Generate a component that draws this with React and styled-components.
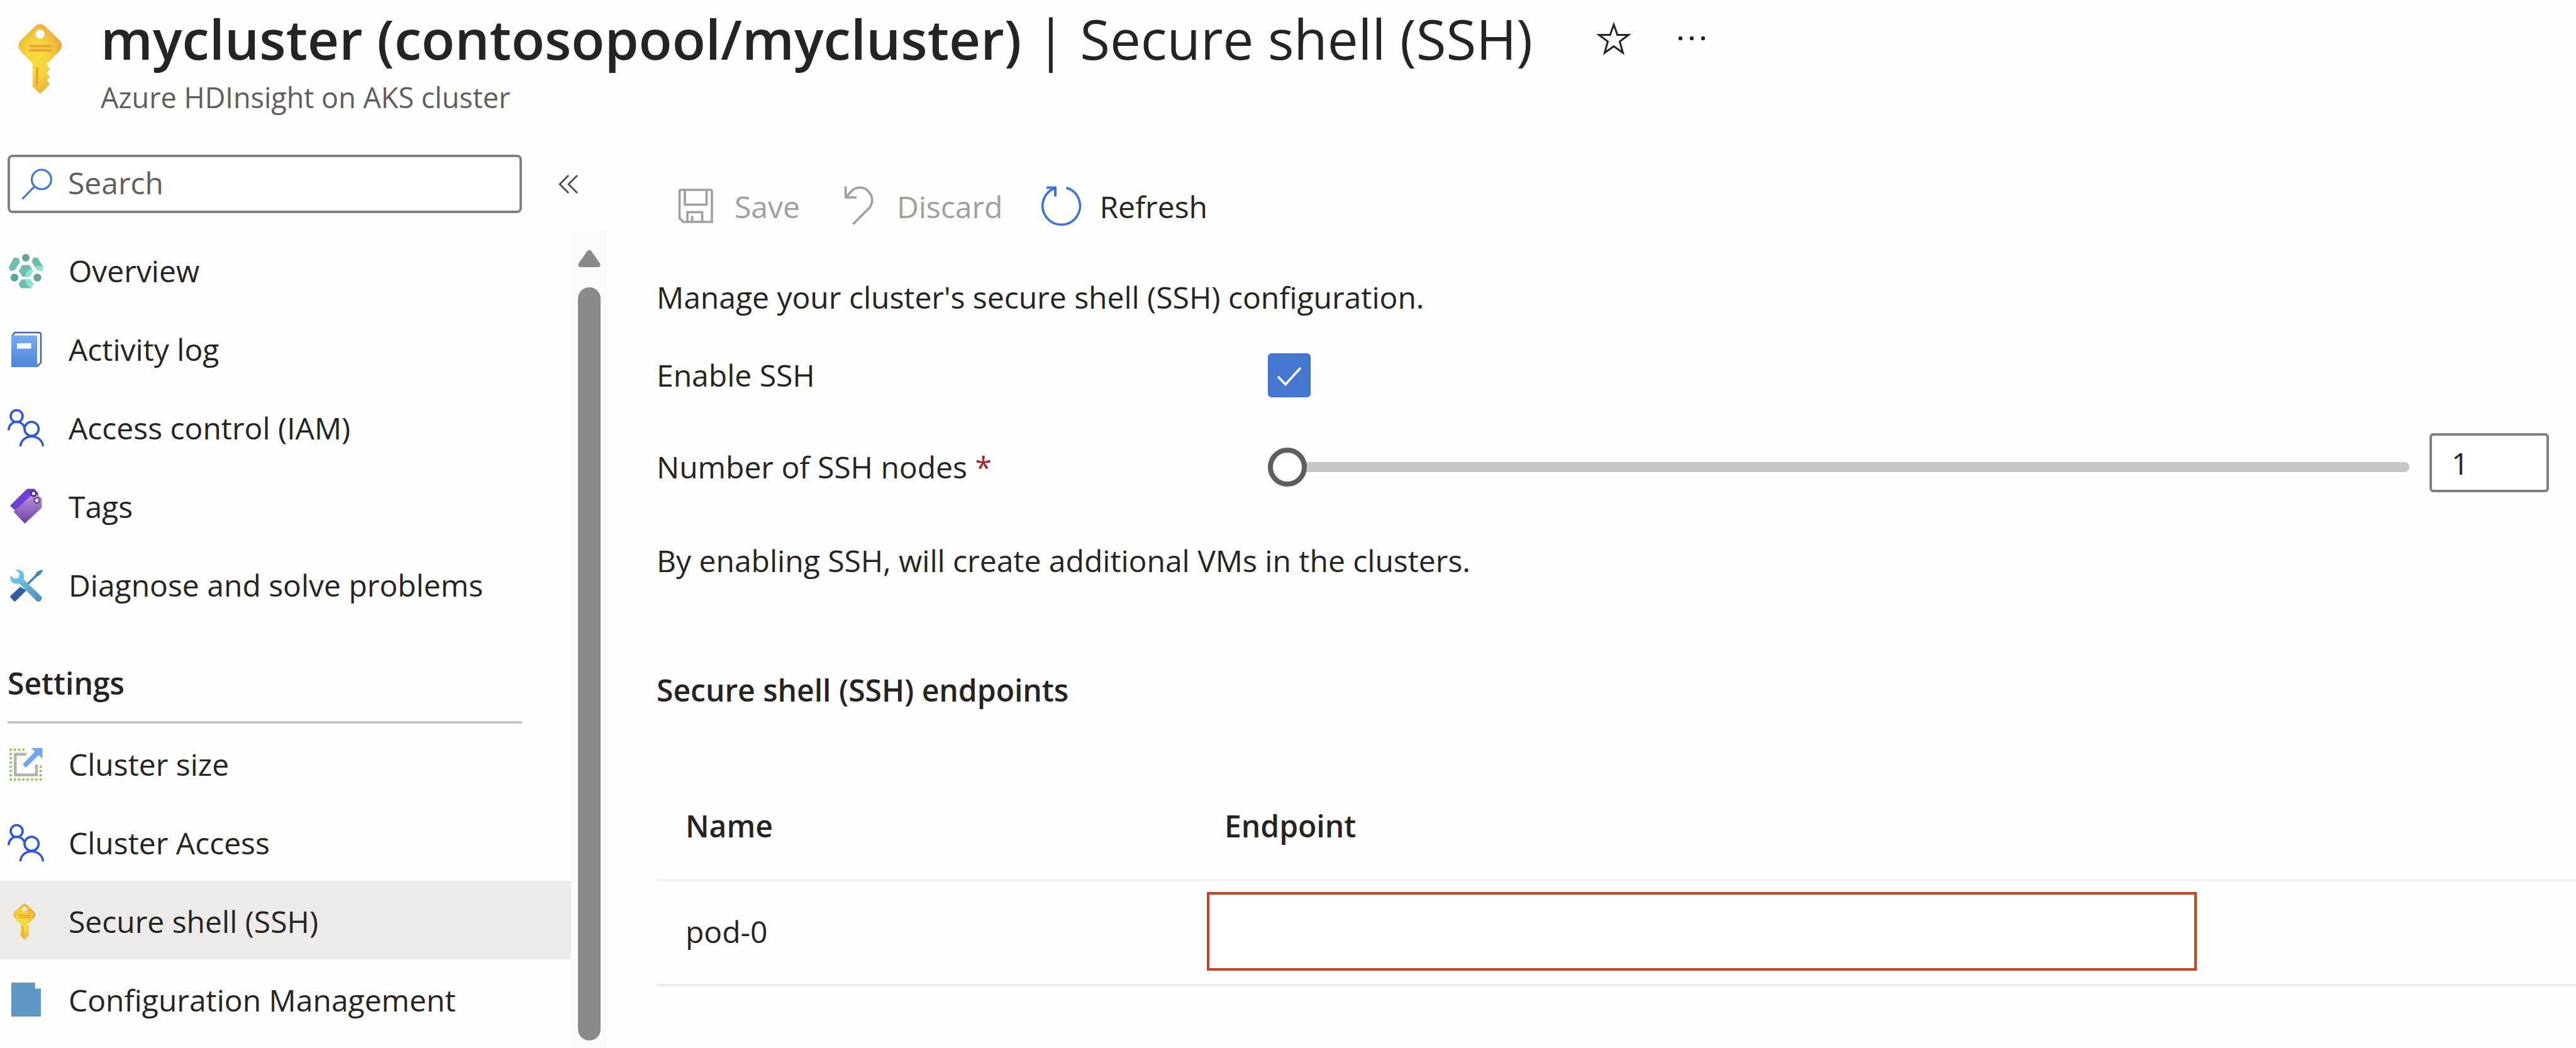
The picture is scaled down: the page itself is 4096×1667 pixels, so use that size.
import React, { useState } from "react";
import styled, { createGlobalStyle } from "styled-components";

const GlobalStyle = createGlobalStyle`
  *, *::before, *::after { box-sizing: border-box; }
  body {
    margin: 0;
    background: #fefefe;
    color: #252423;
    font-family: "Open Sans", "Noto Sans", sans-serif;
    font-size: 48px;
    line-height: 64px;
  }
  button, input { font: inherit; color: inherit; }
  h1, h2, p, ul { margin: 0; padding: 0; font-size: inherit; }
`;

const Page = styled.div`
  display: flex;
  flex-direction: column;
  min-height: 100vh;
`;

const Header = styled.header`
  display: flex;
  align-items: flex-start;
  height: 246px;
  padding-left: 29px;
`;

const HeaderIcon = styled.div`
  display: flex;
  margin: 38px 61px 0 0;
`;

const TitleRow = styled.div`
  display: flex;
  align-items: center;
  height: 122px;
`;

const Title = styled.h1`
  font-size: 87px;
  line-height: 120px;
  font-weight: 600;
  white-space: nowrap;
`;

const TitleSection = styled.span`
  font-weight: 400;
`;

const Subtitle = styled.p`
  font-size: 45px;
  line-height: 66px;
  color: #605e5c;
`;

const IconButton = styled.button`
  display: flex;
  align-items: center;
  justify-content: center;
  padding: 0;
  border: 0;
  background: none;
`;

const StarButton = styled(IconButton)`
  margin-left: 102px;
`;

const MoreButton = styled(IconButton)`
  margin-left: 75px;
`;

const Body = styled.div`
  display: flex;
  flex: 1;
`;

const Sidebar = styled.aside`
  display: flex;
  flex-direction: column;
  flex: none;
  width: 966px;
`;

const SearchRow = styled.div`
  display: flex;
  align-items: center;
  gap: 58px;
  padding-left: 12px;
  margin-bottom: 27px;
`;

const SearchBox = styled.label`
  display: flex;
  align-items: center;
  gap: 24px;
  width: 818px;
  height: 93px;
  padding-left: 18px;
  border: 4px solid #82817f;
  border-radius: 8px;
  background: #fff;
`;

const SearchInput = styled.input`
  flex: 1;
  min-width: 0;
  height: 80px;
  padding: 0 0 4px;
  border: 0;
  outline: 0;
  background: none;
  &::placeholder { color: #605e5c; opacity: 1; }
`;

const NavArea = styled.div`
  display: flex;
  flex: 1;
`;

const Nav = styled.nav`
  flex: 1;
`;

const NavList = styled.ul`
  list-style: none;
`;

const NavLink = styled.a`
  display: flex;
  align-items: center;
  gap: 39px;
  height: 125px;
  padding: 4px 0 0 12px;
  color: inherit;
  text-decoration: none;
  white-space: nowrap;
  background: ${(p) => (p.$active ? "#edebea" : "transparent")};
`;

const NavHeading = styled.h2`
  width: 818px;
  margin-left: 12px;
  padding: 64px 0 28px;
  border-bottom: 4px solid #c8c6c4;
  font-weight: 600;
`;

const ScrollTrack = styled.div`
  display: flex;
  flex-direction: column;
  align-items: center;
  gap: 32px;
  width: 58px;
  padding: 31px 0 12px;
  background: #fbfbfb;
`;

const ScrollThumb = styled.div`
  flex: 1;
  width: 36px;
  border-radius: 18px;
  background: #8a8a8a;
`;

const Main = styled.main`
  flex: 1;
  min-width: 0;
  padding-left: 78px;
`;

const Toolbar = styled.div`
  display: flex;
  align-items: center;
  gap: 61px;
  height: 165px;
  padding-left: 31px;
`;

const ToolButton = styled.button`
  display: flex;
  align-items: center;
  gap: 29px;
  padding: 0;
  border: 0;
  background: none;
  color: ${(p) => (p.disabled ? "#a19f9d" : "#252423")};
`;

const Form = styled.form`
  display: flex;
  flex-direction: column;
  gap: 45px;
  padding: 30px 43px 0 0;
`;

const Field = styled.div`
  display: flex;
  align-items: center;
  min-height: ${(p) => (p.$tall ? 108 : 94)}px;
`;

const FieldLabel = styled.label`
  flex: none;
  width: 972px;
`;

const Required = styled.span`
  color: #a4262c;
`;

const CheckWrap = styled.span`
  display: grid;
  > * { grid-area: 1 / 1; }
  > svg { pointer-events: none; }
`;

const Checkbox = styled.input`
  appearance: none;
  width: 68px;
  height: 70px;
  margin: 0;
  border: 2px solid #3f72cd;
  border-radius: 6px;
  background: #fff;
  &:checked { background: #4577d0; }
`;

const Slider = styled.input`
  appearance: none;
  flex: 1;
  min-width: 0;
  height: 62px;
  margin: 0 32px 0 0;
  background: none;
  &::-webkit-slider-runnable-track {
    height: 16px;
    border-radius: 8px;
    background: #c8c6c4;
  }
  &::-webkit-slider-thumb {
    appearance: none;
    width: 62px;
    height: 62px;
    margin-top: -23px;
    border: 8px solid #605e5c;
    border-radius: 50%;
    background: #fff;
  }
`;

const NumberInput = styled.input`
  align-self: flex-start;
  width: 190px;
  height: 94px;
  padding: 0 0 0 31px;
  border: 4px solid #82817f;
  border-radius: 6px;
  background: #fff;
`;

const Note = styled.p`
  line-height: 100px;
`;

const SectionTitle = styled.h2`
  margin: 124px 0 96px;
  font-weight: 600;
`;

const Table = styled.table`
  width: 100%;
  border-collapse: separate;
  border-spacing: 0;
  table-layout: fixed;
`;

const HeadCell = styled.th`
  width: ${(p) => (p.$first ? "875px" : "auto")};
  height: 176px;
  padding: 4px 0 0 ${(p) => (p.$first ? 46 : 28)}px;
  border-bottom: 4px solid #f3f2f1;
  text-align: left;
  font-weight: 600;
`;

const Cell = styled.td`
  height: 167px;
  padding: 0 0 4px ${(p) => (p.$first ? 46 : 0)}px;
  border-bottom: 4px solid #edebe9;
`;

const EndpointBox = styled.div`
  width: calc(100% - 603px);
  height: 125px;
  border: 4px solid #d83b1a;
  background: #fff;
`;

function KeyIcon({ height, id }) {
  return (
    <svg width={Math.round((height * 240) / 382)} height={height} viewBox="102 75 240 382" aria-hidden="true">
      <defs>
        <radialGradient id={id} cx="0.42" cy="0.5" r="0.55">
          <stop offset="0" stopColor="#f5dc3d" />
          <stop offset="0.45" stopColor="#f3d63e" />
          <stop offset="1" stopColor="#ecae39" />
        </radialGradient>
      </defs>
      <path
        fill={`url(#${id})`}
        fillRule="evenodd"
        d="M192 90Q221 62 251 90L329 166Q352 194 329 222L256 296L275 322L257 344L275 364L257 384L275 405L229 451Q221 459 213 451L180 418V292L114 224Q92 194 114 166ZM221 106a25 25 0 1 0 0.1 0Z"
      />
      <path d="M168 197H279M168 220H279" stroke="#eaa334" strokeWidth="14" strokeLinecap="round" />
      <path d="M205 318V410" stroke="#eaa334" strokeWidth="14" strokeLinecap="round" />
    </svg>
  );
}

const Icon = ({ children, size = 58 }) => (
  <svg width={size} height={size} viewBox={`0 0 ${size} ${size}`} fill="none" overflow="visible" aria-hidden="true">
    {children}
  </svg>
);

const OverviewIcon = () => (
  <Icon>
    <g fill="#6fbdb0">
      <path d="M18 29L23.500 19.600H35L40.500 29L35 38.300H23.500Z" />
      <path d="M1.800 23.500L10 8H17L20 14.500L12 27L5 29.500Z" />
      <path d="M57 23.500L48 8H41L38.500 14.500L46.500 27L54.500 29.500Z" />
      <path d="M17.500 50L22.500 42.500H36L41.200 50L37 56.500H21.500Z" />
    </g>
    <g fill="#86e6cb">
      <path d="M38.500 25.500L40.500 29L35 38.300H28Q29 28 38.500 25.500Z" />
      <path d="M44 22Q50 20 57 22V23.500L54.500 29.500L46.500 27Z" />
      <path d="M28 42.500H36L41.200 50L37 56.500Q30 52 28 42.500Z" />
    </g>
    <g fill="#5fa698">
      <circle cx="29" cy="8" r="6" />
      <circle cx="11" cy="39.500" r="6.200" />
      <circle cx="47.500" cy="39.500" r="6.200" />
    </g>
  </Icon>
);

const LogIcon = () => (
  <Icon>
    <defs>
      <linearGradient id="book" x1="0" y1="0" x2="0" y2="1">
        <stop offset="0" stopColor="#76abee" />
        <stop offset="1" stopColor="#4f86d6" />
      </linearGradient>
    </defs>
    <path d="M7 8L11.500 2H51L53 3.500V50L46 56.500" fill="#fff" stroke="#3f66ae" strokeWidth="2.500" />
    <rect x="6" y="6.500" width="41" height="50.500" rx="1.500" fill="url(#book)" />
    <rect x="15" y="19" width="22.500" height="8.500" fill="#fff" />
  </Icon>
);

const PeopleIcon = () => (
  <Icon>
    <g stroke="#2f57dc" strokeWidth="3.600">
      <circle cx="14.500" cy="10" r="9.500" />
      <path d="M1.800 32.500C2.500 15 25 15 27.500 30" />
      <circle cx="38.200" cy="30.200" r="11.200" />
      <path d="M20.300 58C22.500 37 54 37 56.500 58" />
    </g>
  </Icon>
);

const TagsIcon = () => (
  <Icon>
    <defs>
      <linearGradient id="tag" x1="0" y1="0" x2="0" y2="1">
        <stop offset="0" stopColor="#b892e0" />
        <stop offset="1" stopColor="#6c45a5" />
      </linearGradient>
    </defs>
    <path d="M3.900 27.500L30 1.500Q31 0.500 33 0.500H42.500L49 8V16L11.600 34.500Z" fill="#7040d4" />
    <path d="M9.500 37L38 10.500Q40 9 43 9H47L54.500 15.500V29Q54.500 30.500 53 32L27.500 56Z" fill="url(#tag)" />
    <circle cx="41.400" cy="8" r="4" fill="#fff" stroke="#45238c" strokeWidth="2.500" />
    <circle cx="46.600" cy="19" r="4" fill="#fff" stroke="#6a43a0" strokeWidth="2.500" />
  </Icon>
);

const ToolsIcon = () => (
  <Icon>
    <defs>
      <linearGradient id="wrench" x1="0" y1="0" x2="1" y2="1">
        <stop offset="0" stopColor="#78d4f7" />
        <stop offset="1" stopColor="#4c8fb8" />
      </linearGradient>
    </defs>
    <path d="M54.500 4L47 7.500L43 13.500L30.500 26L33 28.500L46 16L52 12L56 5.500Z" fill="#4583b4" />
    <path d="M20 31.500L30 37L13 54Q11.500 55.500 10 54L4.500 48Q3.500 47 4.500 46Z" fill="#2f5f9f" />
    <path d="M12.500 4.500Q20 2 24.500 8Q28 13 25.500 19.500L54 47Q55.500 49.500 53 53Q49.500 56.500 46 54L18.500 26Q11 28.500 6.500 23.500Q3 19 4.500 13.500L11 18.500L17.500 17L19 10.500Z" fill="url(#wrench)" />
  </Icon>
);

const DOTS = [
  ...[0, 1, 2, 3].map((i) => [5 + i * 6.8, 5.5]),
  ...[1, 2, 3, 4, 5, 6].map((i) => [5, 5.5 + i * 6.8]),
  ...[0, 1, 2, 3, 4, 5, 6, 7].map((i) => [5 + i * 6.8, 53]),
  ...[4, 5, 6].map((i) => [52.6, 5.5 + i * 6.8]),
];

const ResizeIcon = () => (
  <Icon>
    {DOTS.map(([x, y]) => (
      <rect key={`${x}-${y}`} x={x - 1.8} y={y - 1.8} width="3.600" height="3.600" rx="0.800" fill="#8cc04a" />
    ))}
    <path d="M29.800 12.700H12.300V45.400H46V29" stroke="#b1b1b1" strokeWidth="4.500" />
    <path d="M55.500 2.800H38L43.500 8.500L24 29L29 34.300L49.500 14L55.500 19.800Z" fill="#6fa5ec" />
  </Icon>
);

const FileIcon = () => (
  <Icon>
    <path d="M6 1H43.700V10.500H53V55H6Z" fill="#6197c4" />
  </Icon>
);

const SmallKeyIcon = () => (
  <Icon>
    <g transform="translate(9 0)">
      <KeyIcon height={58} id="keySmall" />
    </g>
  </Icon>
);

const SearchIcon = () => (
  <svg width="50" height="50" viewBox="0 0 50 50" fill="none" aria-hidden="true">
    <g stroke="#4078d8" strokeWidth="3.200">
      <circle cx="32" cy="17.500" r="15.500" />
      <path d="M21 28.500L1.500 48.500" />
    </g>
  </svg>
);

const StarIcon = () => (
  <svg width="54" height="54" viewBox="0 0 54 54" fill="none" aria-hidden="true">
    <path d="M27 5L32.800 21.500H50.500L36.500 32L41.500 50L27 39.500L12.500 50L17.500 32L3.500 21.500H21.200Z" stroke="#252423" strokeWidth="3" />
  </svg>
);

const MoreIcon = () => (
  <svg width="44" height="12" viewBox="0 0 44 12" fill="#252423" aria-hidden="true">
    <circle cx="4" cy="6" r="3.200" />
    <circle cx="22" cy="6" r="3.200" />
    <circle cx="40" cy="6" r="3.200" />
  </svg>
);

const CollapseIcon = () => (
  <svg width="32" height="30" viewBox="0 0 32 30" fill="none" aria-hidden="true">
    <path d="M16 1L2 15L16 29M30 1L16 15L30 29" stroke="#484644" strokeWidth="2.600" />
  </svg>
);

const SaveIcon = () => (
  <Icon size={64}>
    <g stroke="#a19f9d" strokeWidth="3.600">
      <path d="M8 5H55Q57 5 57 7V56H11.500L5.500 50V7Q5.500 5 8 5Z" />
      <path d="M14 5V28.500H48.500V5M18 56V40.500H41.500V56M25.500 46.500V56" />
    </g>
  </Icon>
);

const UndoIcon = () => (
  <Icon size={64}>
    <path d="M11.500 -0.500V17H29M11.500 17L21 7C38 -10 64 14 49.500 33.500L23.500 59.500" stroke="#a19f9d" strokeWidth="3.600" />
  </Icon>
);

const RefreshIcon = () => (
  <Icon size={64}>
    <g stroke="#3d74d6" strokeWidth="3.600">
      <path d="M40.500 1.800A29.800 29.800 0 1 1 23 2.300" />
      <path d="M9 1.500H23V15.500" strokeWidth="4" />
    </g>
  </Icon>
);

const CheckIcon = () => (
  <svg width="68" height="70" viewBox="0 0 68 70" fill="none" aria-hidden="true">
    <path d="M16 37L28 49.500L52 23" stroke="#fff" strokeWidth="3.600" />
  </svg>
);

const UpArrow = () => (
  <svg width="36" height="28" viewBox="0 0 36 28" aria-hidden="true">
    <path d="M15 2Q18 -1 21 2L35 22Q37 28 31 28H5Q-1 28 1 22Z" fill="#8a8a8a" />
  </svg>
);

const GENERAL = [
  ["Overview", OverviewIcon],
  ["Activity log", LogIcon],
  ["Access control (IAM)", PeopleIcon],
  ["Tags", TagsIcon],
  ["Diagnose and solve problems", ToolsIcon],
];

const SETTINGS = [
  ["Cluster size", ResizeIcon],
  ["Cluster Access", PeopleIcon],
  ["Secure shell (SSH)", SmallKeyIcon],
  ["Configuration Management", FileIcon],
];

function NavItems({ items }) {
  return (
    <NavList>
      {items.map(([label, Glyph]) => (
        <li key={label}>
          <NavLink href="#" $active={label === "Secure shell (SSH)"}>
            <Glyph />
            {label}
          </NavLink>
        </li>
      ))}
    </NavList>
  );
}

export default function App() {
  const [enabled, setEnabled] = useState(true);
  const [nodes, setNodes] = useState(1);
  const changeNodes = (e) => setNodes(e.target.value);

  return (
    <Page>
      <GlobalStyle />
      <Header>
        <HeaderIcon>
          <KeyIcon height={111} id="keyLarge" />
        </HeaderIcon>
        <div>
          <TitleRow>
            <Title>
              mycluster (contosopool/mycluster) <TitleSection>| Secure shell (SSH)</TitleSection>
            </Title>
            <StarButton type="button" aria-label="Favorite"><StarIcon /></StarButton>
            <MoreButton type="button" aria-label="More"><MoreIcon /></MoreButton>
          </TitleRow>
          <Subtitle>Azure HDInsight on AKS cluster</Subtitle>
        </div>
      </Header>
      <Body>
        <Sidebar>
          <SearchRow>
            <SearchBox>
              <SearchIcon />
              <SearchInput type="text" placeholder="Search" aria-label="Search" />
            </SearchBox>
            <IconButton type="button" aria-label="Collapse"><CollapseIcon /></IconButton>
          </SearchRow>
          <NavArea>
            <Nav>
              <NavItems items={GENERAL} />
              <NavHeading>Settings</NavHeading>
              <NavItems items={SETTINGS} />
            </Nav>
            <ScrollTrack>
              <UpArrow />
              <ScrollThumb />
            </ScrollTrack>
          </NavArea>
        </Sidebar>
        <Main>
          <Toolbar>
            <ToolButton type="button" disabled><SaveIcon />Save</ToolButton>
            <ToolButton type="button" disabled><UndoIcon />Discard</ToolButton>
            <ToolButton type="button"><RefreshIcon />Refresh</ToolButton>
          </Toolbar>
          <Form>
            <p>Manage your cluster's secure shell (SSH) configuration.</p>
            <Field>
              <FieldLabel htmlFor="enable">Enable SSH</FieldLabel>
              <CheckWrap>
                <Checkbox id="enable" type="checkbox" checked={enabled} onChange={(e) => setEnabled(e.target.checked)} />
                <CheckIcon />
              </CheckWrap>
            </Field>
            <Field $tall>
              <FieldLabel htmlFor="nodes">
                Number of SSH nodes <Required>*</Required>
              </FieldLabel>
              <Slider id="nodes" type="range" min="1" max="10" value={nodes} onChange={changeNodes} />
              <NumberInput type="text" aria-label="Number of SSH nodes" value={nodes} onChange={changeNodes} />
            </Field>
            <Note>By enabling SSH, will create additional VMs in the clusters.</Note>
          </Form>
          <SectionTitle>Secure shell (SSH) endpoints</SectionTitle>
          <Table>
            <thead>
              <tr>
                <HeadCell $first scope="col">Name</HeadCell>
                <HeadCell scope="col">Endpoint</HeadCell>
              </tr>
            </thead>
            <tbody>
              <tr>
                <Cell $first>pod-0</Cell>
                <Cell><EndpointBox /></Cell>
              </tr>
            </tbody>
          </Table>
        </Main>
      </Body>
    </Page>
  );
}
